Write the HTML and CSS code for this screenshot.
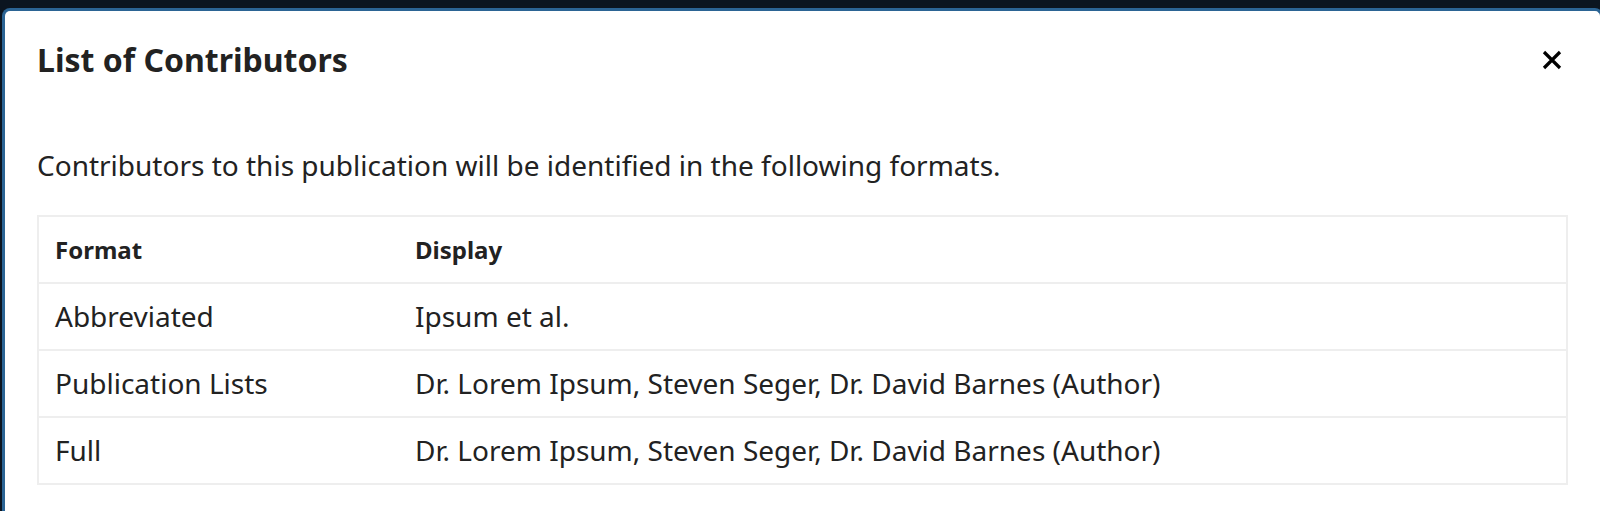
FILE: index.html
```html
<!DOCTYPE html>
<html lang="en">
<head>
<meta charset="utf-8">
<title>List of Contributors</title>
<link rel="stylesheet" href="styles.css">
</head>
<body>
<div class="backdrop">
  <div class="modal">
    <div class="modal-header">
      <h2 class="modal-title">List of Contributors</h2>
      <button class="close-btn" aria-label="Close">
        <svg width="20" height="20" viewBox="0 0 20 20"><path d="M2 2 L18 18 M18 2 L2 18" stroke="#000" stroke-width="3.2" stroke-linecap="butt" fill="none"/></svg>
      </button>
    </div>
    <div class="modal-body">
      <p class="description">Contributors to this publication will be identified in the following formats.</p>
      <table class="formats">
        <colgroup>
          <col class="col-format">
          <col class="col-display">
        </colgroup>
        <thead>
          <tr><th>Format</th><th>Display</th></tr>
        </thead>
        <tbody>
          <tr><td>Abbreviated</td><td>Ipsum et al.</td></tr>
          <tr><td>Publication Lists</td><td>Dr. Lorem Ipsum, Steven Seger, Dr. David Barnes (Author)</td></tr>
          <tr><td>Full</td><td>Dr. Lorem Ipsum, Steven Seger, Dr. David Barnes (Author)</td></tr>
        </tbody>
      </table>
    </div>
  </div>
</div>
</body>
</html>
```

FILE: styles.css
```css
html, body {
  margin: 0;
  padding: 0;
  height: 100%;
  overflow: hidden;
}
body {
  background: #0b1520;
  font-family: "Noto Sans", "Open Sans", sans-serif;
  color: #222;
}
.backdrop {
  padding: 8px 0 0 2px;
}
.modal {
  background: #fff;
  border: 3px solid #2b6494;
  border-bottom: none;
  border-radius: 8px 8px 0 0;
  margin-right: -3px;
  height: 600px;
  box-sizing: border-box;
}
.modal-header {
  height: 98px;
  display: flex;
  align-items: center;
  justify-content: space-between;
  padding: 0 38px 0 32px;
}
.modal-title {
  margin: 0;
  font-size: 32px;
  line-height: 40px;
  font-weight: 700;
  color: #222;
}
.close-btn {
  border: none;
  background: none;
  padding: 0;
  margin: 0;
  width: 20px;
  height: 20px;
  display: flex;
  cursor: pointer;
}
.modal-body {
  padding: 0 32px;
}
.description {
  margin: 35px 0 0 0;
  font-size: 28px;
  line-height: 42px;
}
.formats {
  margin-top: 29px;
  width: 100%;
  border-collapse: collapse;
  table-layout: fixed;
  border: 2px solid #eeeeee;
}
.col-format {
  width: 361px;
}
.formats th, .formats td {
  text-align: left;
  padding: 13px 16px;
  line-height: 39px;
  border-top: 2px solid #eeeeee;
  white-space: nowrap;
}
.formats th {
  font-size: 24px;
  font-weight: 700;
}
.formats td {
  font-size: 28px;
}
```
